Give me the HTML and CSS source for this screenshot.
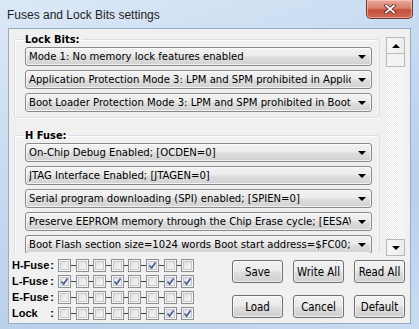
FILE: index.html
```html
<!DOCTYPE html>
<html lang="en">
<head>
  <meta charset="UTF-8" />
  <title>Fuses and Lock Bits settings</title>
  <link rel="stylesheet" href="styles.css">
</head>
<body>
  <div class="window">
    <div class="titlebar">
      <span class="title">Fuses and Lock Bits settings</span>
      <div class="close">
        <svg width="14" height="10" viewBox="0 0 14 10">
          <path d="M3 1.5 L11 8.5 M11 1.5 L3 8.5" stroke="#5a2a22" stroke-width="3.4" stroke-linecap="square"/>
          <path d="M3 1.5 L11 8.5 M11 1.5 L3 8.5" stroke="#fff" stroke-width="1.8" stroke-linecap="square"/>
        </svg>
      </div>
    </div>

    <div class="client">
      <div class="scroller">
        <div class="groups">
          <fieldset class="group">
            <legend>Lock Bits:</legend>
            <div class="combo"><span class="combo-text">Mode 1: No memory lock features enabled</span><span class="arrow"></span></div>
            <div class="combo"><span class="combo-text">Application Protection Mode 3: LPM and SPM prohibited in Application Section</span><span class="arrow"></span></div>
            <div class="combo"><span class="combo-text">Boot Loader Protection Mode 3: LPM and SPM prohibited in Boot Loader Section</span><span class="arrow"></span></div>
          </fieldset>

          <fieldset class="group">
            <legend>H Fuse:</legend>
            <div class="combo"><span class="combo-text">On-Chip Debug Enabled; [OCDEN=0]</span><span class="arrow"></span></div>
            <div class="combo"><span class="combo-text">JTAG Interface Enabled; [JTAGEN=0]</span><span class="arrow"></span></div>
            <div class="combo"><span class="combo-text">Serial program downloading (SPI) enabled; [SPIEN=0]</span><span class="arrow"></span></div>
            <div class="combo"><span class="combo-text">Preserve EEPROM memory through the Chip Erase cycle; [EESAVE=0]</span><span class="arrow"></span></div>
            <div class="combo"><span class="combo-text">Boot Flash section size=1024 words Boot start address=$FC00; [BOOTSZ=01]</span><span class="arrow"></span></div>
            <div class="combo"><span class="combo-text">Boot Reset vector Enabled; [BOOTRST=0]</span><span class="arrow"></span></div>
          </fieldset>
        </div>

        <div class="scrollbar">
          <div class="sb-btn"><span class="tri-up"></span></div>
          <div class="sb-thumb"></div>
          <div class="sb-track"></div>
          <div class="sb-btn"><span class="tri-down"></span></div>
        </div>
      </div>

      <div class="bottom">
        <div class="bits">
          <div class="bit-row">
            <span class="bit-label"><span>H-Fuse</span><span>:</span></span>
            <span class="cb"></span><i></i><span class="cb"></span><i></i><span class="cb"></span><i></i><span class="cb"></span><i></i><span class="cb"></span><i></i><span class="cb on"></span><i></i><span class="cb"></span><i></i><span class="cb"></span>
          </div>
          <div class="bit-row">
            <span class="bit-label"><span>L-Fuse</span><span>:</span></span>
            <span class="cb on"></span><i></i><span class="cb"></span><i></i><span class="cb"></span><i></i><span class="cb on"></span><i></i><span class="cb"></span><i></i><span class="cb"></span><i></i><span class="cb on"></span><i></i><span class="cb on"></span>
          </div>
          <div class="bit-row">
            <span class="bit-label"><span>E-Fuse</span><span>:</span></span>
            <span class="cb"></span><i></i><span class="cb"></span><i></i><span class="cb"></span><i></i><span class="cb"></span><i></i><span class="cb"></span><i></i><span class="cb"></span><i></i><span class="cb"></span><i></i><span class="cb"></span>
          </div>
          <div class="bit-row">
            <span class="bit-label"><span>Lock</span><span>:</span></span>
            <span class="cb"></span><i></i><span class="cb"></span><i></i><span class="cb"></span><i></i><span class="cb"></span><i></i><span class="cb"></span><i></i><span class="cb"></span><i></i><span class="cb on"></span><i></i><span class="cb on"></span>
          </div>
        </div>

        <div class="buttons">
          <button class="btn" type="button">Save</button>
          <button class="btn" type="button">Write All</button>
          <button class="btn" type="button">Read All</button>
          <button class="btn" type="button">Load</button>
          <button class="btn" type="button">Cancel</button>
          <button class="btn" type="button">Default</button>
        </div>
      </div>
    </div>
  </div>
</body>
</html>
```

FILE: styles.css
```css
body {
  margin: 0;
  background-color: #c4d8ee;
  font-family: "DejaVu Sans Condensed", "Liberation Sans", sans-serif;
  font-size: 11px;
  color: #000;
}

.window {
  width: 419px;
  height: 329px;
  box-sizing: border-box;
  padding: 0 8px 5px 8px;
  background: linear-gradient(160deg, #dbe8f7 0%, #c6daf0 40%, #b9d0ea 70%, #c9dcf1 100%);
}

.titlebar {
  height: 28px;
  display: flex;
  justify-content: space-between;
  align-items: flex-start;
  margin-right: -2px;
}

.title {
  font-family: "Liberation Sans", sans-serif;
  font-size: 12px;
  color: #1e1e1e;
  margin-top: 8px;
  margin-left: -1px;
}

.close {
  width: 47px;
  height: 19px;
  box-sizing: border-box;
  border: 1px solid #6e3a33;
  border-top: none;
  border-radius: 0 0 5px 5px;
  background: linear-gradient(#e9a99b 0%, #d8806d 45%, #c3503b 55%, #d06a55 100%);
  box-shadow: inset 0 0 0 1px rgba(255, 220, 210, 0.5);
  display: flex;
  justify-content: center;
  align-items: center;
}

.client {
  height: 296px;
  box-sizing: border-box;
  border: 1px solid #96abc4;
  background-color: #f0f0f0;
  display: flex;
  flex-direction: column;
}

.scroller {
  height: 227px;
  display: flex;
}

.groups {
  width: 366px;
  height: 224px;
  flex: none;
  margin-left: 5px;
  overflow: hidden;
}

.group {
  min-width: 0;
  margin: 4px 0 11px 0;
  padding: 0 7px 5px 10px;
  border: 1px solid #d5dfe5;
  border-radius: 3px;
  box-shadow: inset 1px 1px 0 #fff, 1px 1px 0 #fff;
}

legend {
  font-weight: bold;
  font-size: 11px;
  line-height: 13px;
  padding: 0 2px;
  margin-left: -2px;
  color: #000;
}

.combo {
  height: 19px;
  box-sizing: border-box;
  margin-top: 4px;
  border: 1px solid #8a8a8a;
  border-radius: 3px;
  background: linear-gradient(#f3f3f3 0%, #ebebeb 45%, #dddddd 55%, #d2d2d2 100%);
  box-shadow: inset 0 0 0 1px rgba(255, 255, 255, 0.7);
  display: flex;
  align-items: center;
  padding-left: 3px;
}

.combo:first-of-type {
  margin-top: 1px;
}

.combo-text {
  flex: 1;
  min-width: 0;
  white-space: nowrap;
  overflow: hidden;
  font-size: 11.2px;
  line-height: 17px;
}

.arrow {
  flex: none;
  width: 0;
  height: 0;
  margin: 1px 5px 0 7px;
  border-left: 4px solid transparent;
  border-right: 4px solid transparent;
  border-top: 4px solid #000;
}

.scrollbar {
  width: 19px;
  flex: none;
  margin: 8px 5px 0 auto;
  display: flex;
  flex-direction: column;
}

.sb-btn {
  height: 17px;
  box-sizing: border-box;
  border: 1px solid #b8b8b8;
  background: linear-gradient(90deg, #f6f6f6, #ececec);
  display: flex;
  justify-content: center;
  align-items: center;
}

.sb-thumb {
  height: 13px;
  box-sizing: border-box;
  border: 1px solid #b8b8b8;
  border-top: none;
  background-color: #f3f3f3;
}

.sb-track {
  flex: 1;
  background-color: #f4f4f4;
  background-image: repeating-conic-gradient(#ffffff 0 25%, #e9e9e9 0 50%);
  background-size: 2px 2px;
}

.tri-up,
.tri-down {
  width: 0;
  height: 0;
  border-left: 4px solid transparent;
  border-right: 4px solid transparent;
}

.tri-up {
  border-bottom: 4px solid #000;
}

.tri-down {
  border-top: 4px solid #000;
}

.bottom {
  flex: 1;
  display: flex;
  justify-content: space-between;
  padding: 1px 5px 0 3px;
}

.bits {
  display: flex;
  flex-direction: column;
}

.bit-row {
  height: 16px;
  display: flex;
  align-items: center;
}

.bit-label {
  width: 42px;
  margin-right: 4px;
  display: flex;
  justify-content: space-between;
  white-space: nowrap;
  font-family: "Liberation Sans", sans-serif;
  font-weight: bold;
  font-size: 11px;
}

.cb {
  flex: none;
  width: 13px;
  height: 13px;
  box-sizing: border-box;
  border: 1px solid #8e8f8f;
  background: linear-gradient(135deg, #d9dcdf, #fbfbfb);
  box-shadow: inset 0 0 0 1px #f6f6f6, inset 0 0 0 2px #c4c8cc;
}

.cb.on {
  background-image: url("data:image/svg+xml,%3Csvg xmlns='http://www.w3.org/2000/svg' width='11' height='11'%3E%3Cpath d='M2.5 5.5 L4.6 8 L8.6 2.5' fill='none' stroke='%234a5f97' stroke-width='1.7'/%3E%3C/svg%3E"), linear-gradient(135deg, #d9dcdf, #fbfbfb);
}

.bit-row i {
  flex: none;
  width: 4.6px;
  height: 1px;
  background-color: #444;
}

.buttons {
  display: grid;
  grid-template-columns: 51px 51px 51px;
  grid-auto-rows: 23px;
  column-gap: 10px;
  row-gap: 12px;
  margin-top: 3px;
}

.btn {
  margin: 0;
  padding: 0;
  font-family: "DejaVu Sans Condensed", "Liberation Sans", sans-serif;
  font-size: 11.4px;
  color: #000;
  border: 1px solid #707070;
  border-radius: 3px;
  background: linear-gradient(#f2f2f2 0%, #ebebeb 45%, #dddddd 55%, #cfcfcf 100%);
  box-shadow: inset 0 0 0 1px rgba(255, 255, 255, 0.6);
}
```
